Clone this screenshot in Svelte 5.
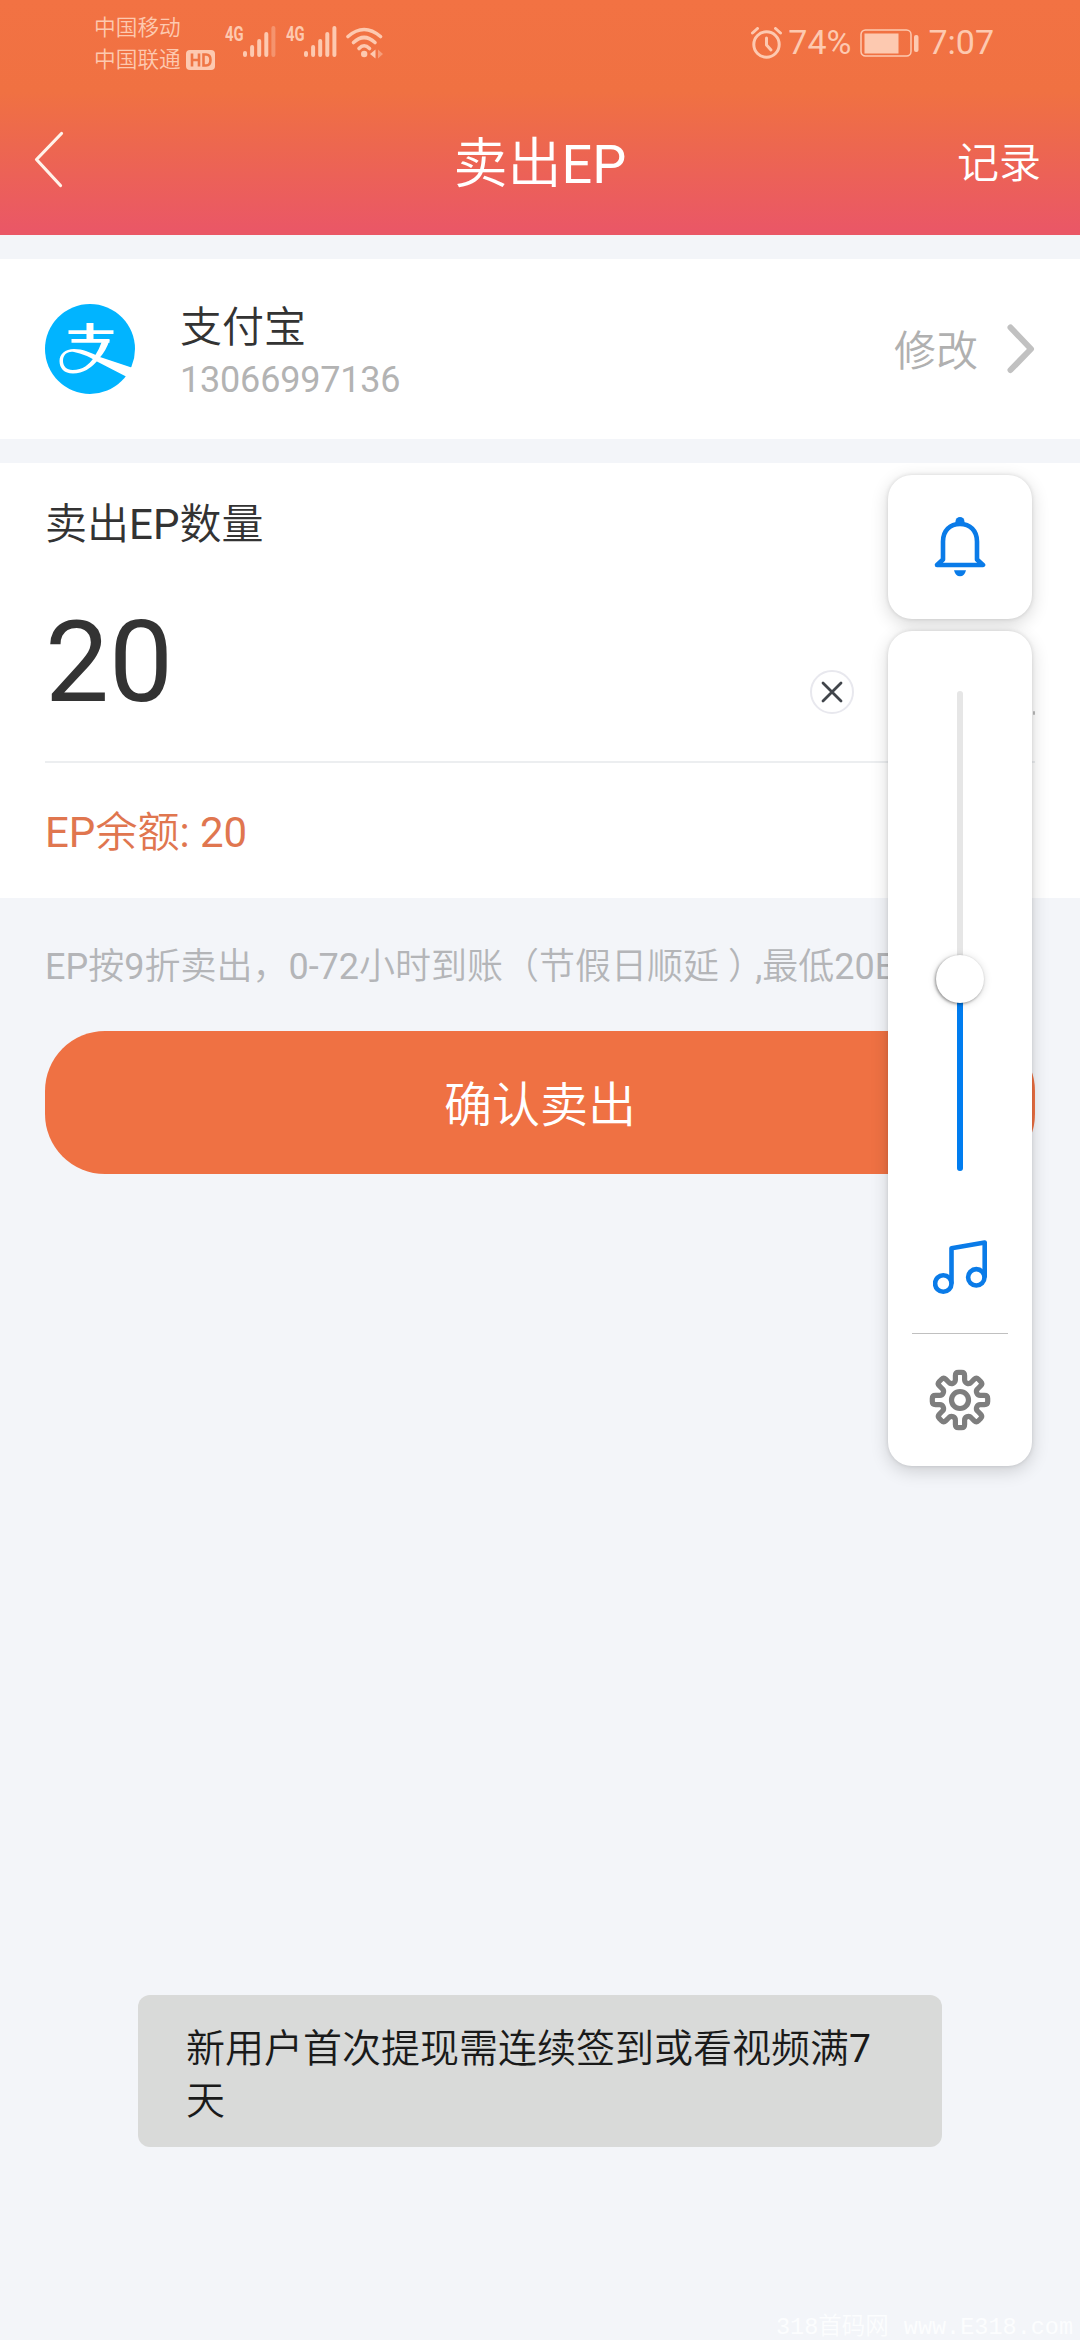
<script>
  let account = $state({ name: '支付宝', number: '13066997136' });
  let amount = $state('20');
  let balance = $state(20);
  let volume = $state(40);

  // signal strength per SIM, out of 5
  const sims = [4, 5];

  // 8-tooth gear outline around 0,0
  function gearPath() {
    const p = (x, y, deg) => {
      const a = (deg * Math.PI) / 180;
      const c = Math.cos(a);
      const s = Math.sin(a);
      return `${(x * c - y * s).toFixed(2)} ${(x * s + y * c).toFixed(2)}`;
    };
    let d = `M${p(-4.6, -20.5, 0)}`;
    for (let i = 0; i < 8; i++) {
      const t = i * 45;
      d += `L${p(-4.6, -24.5, t)}Q${p(-4.6, -27.7, t)} ${p(-1.6, -27.7, t)}`;
      d += `L${p(1.6, -27.7, t)}Q${p(4.6, -27.7, t)} ${p(4.6, -24.5, t)}`;
      d += `L${p(4.6, -20.5, t)}A3.8 3.8 0 0 0 ${p(-4.6, -20.5, t + 45)}`;
    }
    return d + 'Z';
  }
</script>

<div class="page">
  <header class="header">
    <div class="status-bar">
      <div class="carriers">
        <span>中国移动</span>
        <span class="carrier-hd">中国联通
          <svg width="29" height="20" viewBox="0 0 29 20">
            <rect width="29" height="20" rx="4" fill="#fdc9b0" />
            <path d="M6 3.5v13M13 3.5v13M6 10h7M17.5 4.5v11h2.5q4.500 0 4.500-5.500t-4.500-5.500z" fill="none" stroke="#ef7645" stroke-width="2.600" />
          </svg>
        </span>
      </div>
      {#each sims as level}
        <div class="signal">
          <span class="net">4G</span>
          <svg width="34" height="32" viewBox="0 0 34 32">
            {#each [6, 12, 18, 25, 31] as h, i}
              <rect x={i * 7.1} y={31 - h} width="4" height={h} rx="2" fill="#fdc9b0" opacity={i < level ? 1 : 0.4} />
            {/each}
          </svg>
        </div>
      {/each}
      <svg class="wifi" width="38" height="32" viewBox="0 0 38 32">
        <g fill="none" stroke="#fdc9b0" stroke-width="3.600" stroke-linecap="round">
          <path d="M2 9.500Q18 -4.500 34.500 9.500" />
          <path d="M7.500 15.500Q18 5.500 29 15.500" />
          <path d="M13 21.500Q18 16 23.500 21.500" />
        </g>
        <circle cx="18.200" cy="27" r="3.200" fill="#fdc9b0" />
        <path d="M24 27l5.500-4.500v9z" fill="#fdc9b0" />
        <path d="M32 22.500l5 4.500-5 4.500z" fill="#fdc9b0" opacity="0.500" />
      </svg>

      <div class="status-right">
        <svg width="32" height="32" viewBox="0 0 32 32" fill="none" stroke="#fdc9b0" stroke-linecap="round">
          <circle cx="15.500" cy="17.500" r="12.700" stroke-width="3" />
          <path d="M15.500 11v7l4.500 5" stroke-width="3" stroke-linejoin="round" />
          <path d="M1.500 6l5-4.500M29.500 6l-5-4.500" stroke-width="3" />
        </svg>
        <span class="percent">74%</span>
        <svg class="battery" width="59" height="28" viewBox="0 0 59 28">
          <rect x="1" y="1" width="50" height="26" rx="4.500" fill="none" stroke="#fdc9b0" stroke-width="1.500" />
          <rect x="4.500" y="4.500" width="34" height="20" fill="#fdc9b0" />
          <rect x="54" y="6" width="4.500" height="17" rx="2" fill="#fdc9b0" />
        </svg>
        <span class="clock">7:07</span>
      </div>
    </div>

    <nav class="nav">
      <button class="nav-back" aria-label="返回">
        <svg width="30" height="58" viewBox="0 0 30 58">
          <path d="M27.500 2.500L2.500 28.500L26.500 54.500" fill="none" stroke="#fff3ea" stroke-width="3.200" stroke-linecap="round" stroke-linejoin="round" />
        </svg>
      </button>
      <h1>卖出<b>EP</b></h1>
      <button class="nav-log">记录</button>
    </nav>
  </header>

  <section class="account">
    <svg class="alipay" width="90" height="90" viewBox="0 0 90 90">
      <circle cx="45" cy="45" r="45" fill="#01b4ff" />
      <path d="M41.500 19h7v18h-7zM23.500 26.300h45v3.700h-45zM26.500 35h38v3.700h-38z" fill="#fff" />
      <path d="M57.500 36h7Q61.500 46 54.500 54Q43 69.500 28 69.500C19 69.500 14.500 64 14.500 57C14.500 50 20 45 29 45C38 45 45 48.500 55 53L88 64L82 73L51 57Q41 50.500 29 48C22 47 18 51 18 57C18 62 21.500 66 27.500 66C38 66 44 60.500 49 53.500Q54 46 57.500 36z" fill="#fff" />
      <path d="M87.500 63.500L91 64V78L80.500 71.500z" fill="#fff" />
    </svg>
    <div class="account-text">
      <span class="account-name">{account.name}</span>
      <b class="account-number">{account.number}</b>
    </div>
    <span class="edit">修改</span>
    <svg width="28" height="50" viewBox="0 0 28 50">
      <path d="M3.500 3.500L24 25L3.500 46" fill="none" stroke="#c1c1c1" stroke-width="6" stroke-linecap="round" stroke-linejoin="round" />
    </svg>
  </section>

  <section class="sell">
    <div class="sell-label">卖出<b>EP</b>数量</div>
    <div class="amount-row">
      <b class="amount">{amount}</b>
      <button class="clear" aria-label="清除" onclick={() => (amount = '')}>
        <svg width="22" height="22" viewBox="0 0 22 22">
          <path d="M2 2L20 20M20 2L2 20" stroke="#41454b" stroke-width="2.800" stroke-linecap="round" />
        </svg>
      </button>
      <i class="tick"></i>
    </div>
    <div class="balance"><b>EP</b>余额<b>: {balance}</b></div>
  </section>

  <p class="hint"><b>EP</b>按<b>9</b>折卖出，<b>0-72</b>小时到账（节假日顺延<span class="paren">）</span><b>,</b>最低<b>20EP</b></p>
  <button class="confirm">确认卖出</button>

  <!-- system volume overlay -->
  <aside class="volume">
    <div class="volume-card ringer">
      <svg width="52" height="62" viewBox="0 0 52 62" fill="none" stroke="#0a7be8">
        <path d="M9 43.500V25.500C9 14.500 16 8 26 8S43 14.500 43 25.500V43.500L49 49H3z" stroke-width="4.600" stroke-linejoin="round" />
        <circle cx="26" cy="5.500" r="4.500" fill="#0a7be8" stroke="none" />
        <path d="M20 54.300h12q-1.500 6-6 6t-6-6z" fill="#0a7be8" stroke="none" />
      </svg>
    </div>
    <div class="volume-card slider-card">
      <div class="track">
        <div class="fill" style="height: {volume}%">
          <div class="thumb"></div>
        </div>
      </div>
      <svg class="music" width="54" height="54" viewBox="0 0 54 54" fill="none" stroke="#0a7be8" stroke-width="4.600" stroke-linejoin="round">
        <circle cx="10.300" cy="43.500" r="8.200" />
        <circle cx="43.300" cy="37.300" r="8.200" />
        <path d="M18.500 43.500V8.300L51.700 2.500V37.500" />
      </svg>
      <div class="rule"></div>
      <svg class="gear" width="62" height="62" viewBox="-31 -31 62 62" fill="none" stroke="#7e7e7e" stroke-width="5.200" stroke-linejoin="round">
        <path d={gearPath()} />
        <circle r="8.500" />
      </svg>
    </div>
  </aside>

  <div class="toast">新用户首次提现需连续签到或看视频满<b>7</b>天</div>
  <div class="watermark"><span>318首码网</span><span>www.E318.com</span></div>
</div>

<style>
  :global(body) {
    background: #f3f5f9;
  }

  .page {
    position: relative;
    width: 1080px;
    height: 2340px;
    overflow: hidden;
    background: #f3f5f9;
    color: #333;
    font-family: Roboto, 'Noto Sans CJK SC', sans-serif;
    font-size: 42px;
    font-weight: 350;
  }

  b { font-weight: 400; }

  button {
    padding: 0;
    border: none;
    background: none;
    color: inherit;
    font: inherit;
    display: flex;
    align-items: center;
    justify-content: center;
  }

  svg { display: block; flex-shrink: 0; }

  .header {
    height: 235px;
    background: linear-gradient(#f27243 0, #f07142 92px, #ed674f 145px, #ea5766 230px);
    color: #fff;
  }

  .status-bar {
    display: flex;
    align-items: flex-start;
    height: 84px;
    box-sizing: border-box;
    padding: 12px 86px 0 94px;
    color: #fdc9b0;
  }

  .carriers {
    display: flex;
    flex-direction: column;
    width: 131px;
    font-size: 21.7px;
    line-height: 32px;
    white-space: nowrap;
  }

  .carrier-hd {
    display: flex;
    align-items: center;
    gap: 5px;
  }

  .signal {
    display: flex;
    width: 53px;
    margin: 14px 8px 0 0;
  }

  .net {
    width: 18px;
    font-size: 19.5px;
    font-weight: 700;
    line-height: 17px;
    transform: scaleX(0.76);
    transform-origin: left;
  }

  .wifi { margin: 15px 0 0 -1px; }

  .status-right {
    display: flex;
    align-items: center;
    margin: 14px 0 0 auto;
    height: 33px;
    font-size: 34px;
    font-weight: 400;
    line-height: 33px;
  }

  .percent { margin-left: 5px; }
  .battery { margin: 0 9px 0 9px; }

  .nav {
    display: flex;
    align-items: center;
    height: 154px;
    margin-top: -1px;
    padding: 0 39px 0 34px;
  }

  .nav-back, .nav-log { width: 120px; }
  .nav-back { justify-content: flex-start; }
  .nav-log {
    justify-content: flex-end;
    padding-bottom: 2px;
  }

  .nav h1 {
    flex: 1;
    margin: 0;
    padding: 0 0 2px 5px;
    font-size: 54px;
    font-weight: 350;
    text-align: center;
  }

  .account {
    display: flex;
    align-items: center;
    height: 180px;
    margin-top: 24px;
    padding: 0 45px;
    background: #fff;
  }

  .account-text {
    display: flex;
    flex-direction: column;
    flex: 1;
    margin-left: 45px;
    padding-top: 8px;
  }

  .account-name { line-height: 54px; }

  .account-number {
    color: #b3b3b3;
    font-size: 36px;
    letter-spacing: -0.2px;
    line-height: 50px;
  }

  .edit {
    margin-right: 29px;
    padding-bottom: 3px;
    color: #b0b0b0;
  }

  .sell {
    height: 435px;
    box-sizing: border-box;
    margin-top: 24px;
    padding: 32px 45px 0;
    background: #fff;
  }

  .sell-label { line-height: 60px; }

  .amount-row {
    display: flex;
    align-items: center;
    height: 206px;
    border-bottom: 2px solid #eceef0;
  }

  .amount {
    flex: 1;
    padding-top: 8px;
    font-size: 114px;
  }

  .clear {
    width: 44px;
    height: 44px;
    box-sizing: border-box;
    margin: 115px 179px 0 0;
    align-self: flex-start;
    border: 2px solid #e8e8ee;
    border-radius: 50%;
  }

  .tick {
    width: 2px;
    height: 4px;
    margin-top: 156px;
    align-self: flex-start;
    border-radius: 1px;
    background: #bbb;
  }

  .balance {
    padding-top: 40px;
    color: #e0764f;
    line-height: 60px;
  }

  .hint {
    margin: 44px 45px 0;
    height: 50px;
    color: #b4b5b8;
    font-size: 36px;
    line-height: 50px;
    white-space: nowrap;
  }

  /* centres the closing bracket in its em box */
  .paren { margin: 0 -9px 0 9px; }

  .confirm {
    width: 990px;
    height: 143px;
    box-sizing: border-box;
    margin: 39px 45px 0;
    padding-bottom: 4px;
    border-radius: 60px;
    background: #ef7143;
    color: #fff;
    font-size: 48px;
  }

  /* floats over the page, pinned to the right edge */
  .volume {
    position: absolute;
    top: 475px;
    right: 48px;
    display: flex;
    flex-direction: column;
    gap: 12px;
    width: 144px;
  }

  .volume-card {
    display: flex;
    flex-direction: column;
    align-items: center;
    border-radius: 24px;
    background: #fff;
    box-shadow: 0 5px 18px rgba(0, 0, 0, 0.16), 0 0 4px rgba(0, 0, 0, 0.12);
  }

  .ringer {
    height: 144px;
    justify-content: center;
  }

  .slider-card {
    height: 835px;
    box-sizing: border-box;
    padding-top: 60px;
  }

  .track {
    display: flex;
    flex-direction: column;
    justify-content: flex-end;
    width: 6px;
    height: 480px;
    border-radius: 3px;
    background: #e6e6e6;
  }

  .fill {
    display: flex;
    justify-content: center;
    border-radius: 3px;
    background: #007df0;
  }

  .thumb {
    flex: none;
    width: 48px;
    height: 48px;
    margin-top: -24px;
    border-radius: 50%;
    background: #fff;
    box-shadow: -1px 1px 3px rgba(0, 0, 0, 0.4), 0 1px 8px rgba(0, 0, 0, 0.14);
  }

  .music { margin-top: 69px; }

  .rule {
    width: 96px;
    height: 1px;
    margin: 39px 0 35px;
    background: #c0c0c0;
  }

  /* system toast */
  .toast {
    position: absolute;
    top: 1995px;
    left: 138px;
    width: 804px;
    height: 152px;
    box-sizing: border-box;
    padding: 28px 49px 22px 48px;
    border-radius: 12px;
    background: #d9dad9;
    color: #1a1a1a;
    font-size: 39px;
    line-height: 52px;
  }

  .watermark {
    position: absolute;
    left: 776px;
    bottom: -3px;
    display: flex;
    gap: 15px;
    color: #fcfdfe;
    font-family: 'Liberation Mono', 'Noto Sans CJK SC', monospace;
    font-size: 23.5px;
    line-height: 30px;
    white-space: nowrap;
  }
</style>
